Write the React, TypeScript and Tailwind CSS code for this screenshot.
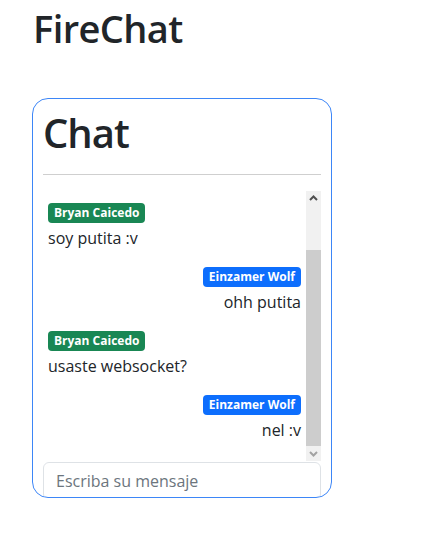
const messages = [
  { user: "Bryan Caicedo", text: "soy putita :v", mine: false },
  { user: "Einzamer Wolf", text: "ohh putita", mine: true },
  { user: "Bryan Caicedo", text: "usaste websocket?", mine: false },
  { user: "Einzamer Wolf", text: "nel :v", mine: true },
]

function Arrow({ up, color }: { up?: boolean; color: string }) {
  return (
    <svg width="15" height="15" viewBox="0 0 15 15">
      <path
        d={up ? "M4 9 L7.5 5.5 L11 9" : "M4 6 L7.5 9.5 L11 6"}
        fill="none"
        stroke={color}
        strokeWidth="2"
      />
    </svg>
  )
}

export default function App() {
  return (
    <div
      className="min-h-screen bg-white px-8 pt-[6px] text-[#212529]"
      style={{ fontFamily: "'Open Sans', 'Noto Sans', sans-serif" }}
    >
      <h1 className="ml-px text-[38px] font-semibold leading-[1.2] tracking-[-0.6px]">FireChat</h1>

      <div className="mt-[46px] flex h-[400px] w-[300px] flex-col overflow-hidden rounded-[16px] border border-[#3d86f7] p-[10px]">
        <h2 className="shrink-0 text-[40px] font-semibold leading-[1.2] tracking-[-1px]">Chat</h2>
        <hr className="mt-[17px] mb-[16px] shrink-0 border-t border-[#cfcfcf]" />

        <div className="flex h-[270px] shrink-0">
          <div className="flex flex-1 flex-col overflow-hidden px-[5px] pt-[12px]">
            {messages.map((m, i) => (
              <div
                key={i}
                className={`mb-[17px] flex flex-col ${m.mine ? "items-end" : "items-start"}`}
              >
                <span
                  className={`flex h-[20px] items-center rounded-[4px] px-[6px] text-[12px] font-bold text-white ${
                    m.mine ? "bg-[#0d6efd]" : "bg-[#198754]"
                  }`}
                >
                  {m.user}
                </span>
                <span className="mt-[3px] text-[16px] leading-6">{m.text}</span>
              </div>
            ))}
          </div>

          <div className="flex w-[15px] flex-col bg-[#f1f1f1]">
            <Arrow up color="#505050" />
            <div className="h-[44px]" />
            <div className="h-[196px] bg-[#cdcdcd]" />
            <div className="flex-1" />
            <Arrow color="#a3a3a3" />
          </div>
        </div>

        <input
          className="mt-px h-[38px] w-full shrink-0 rounded-[6px] border border-[#dee2e6] px-[12px] text-[16px] outline-none placeholder:text-[#6c757d]"
          placeholder="Escriba su mensaje"
        />
      </div>
    </div>
  )
}
